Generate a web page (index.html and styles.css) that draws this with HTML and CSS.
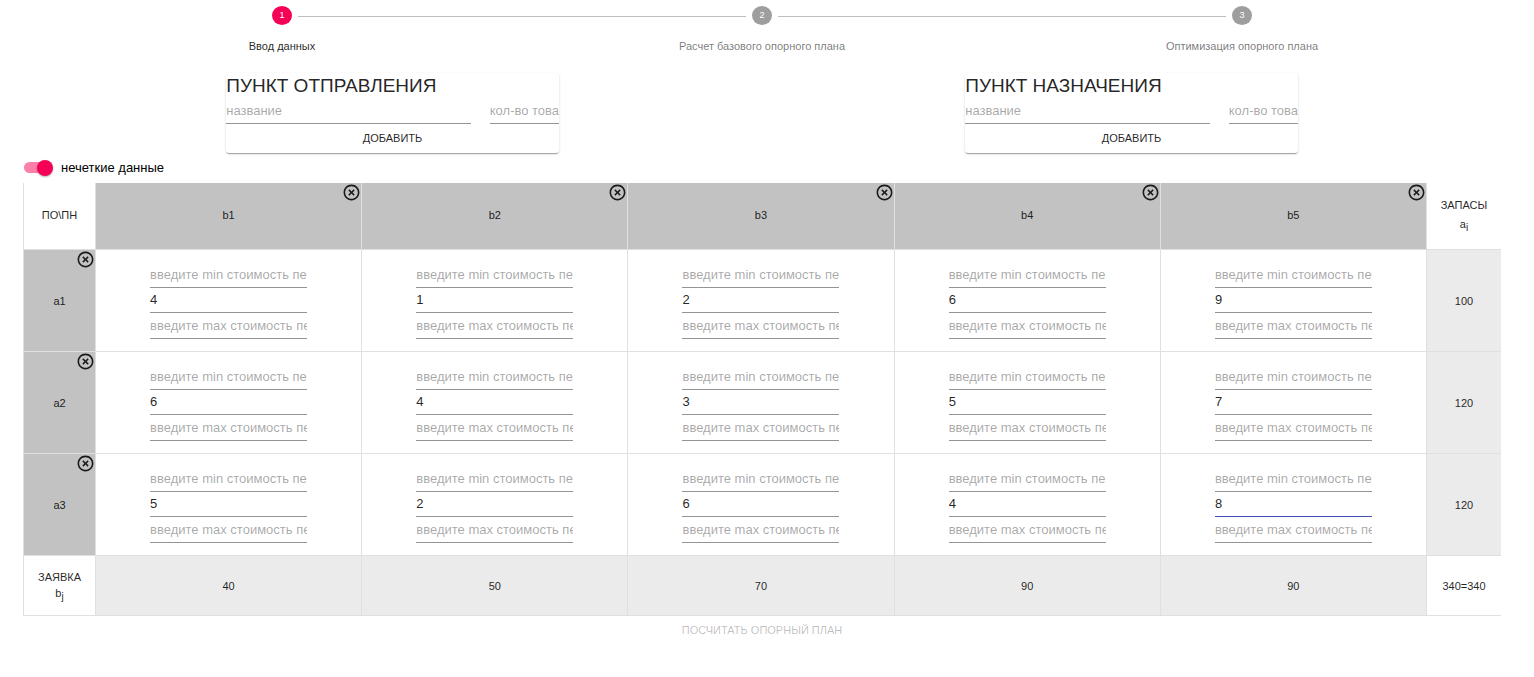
FILE: index.html
```html
<!DOCTYPE html>
<html lang="ru">
<head>
<meta charset="utf-8">
<meta name="viewport" content="width=device-width, initial-scale=1">
<title>Транспортная задача</title>
<link rel="stylesheet" href="styles.css">
</head>
<body>
<svg class="sprite" aria-hidden="true">
  <symbol id="remove" viewBox="0 0 24 24">
    <path d="M14.59 8L12 10.59 9.41 8 8 9.41 10.59 12 8 14.59 9.41 16 12 13.41 14.59 16 16 14.59 13.41 12 16 9.41 14.59 8zM12 2C6.47 2 2 6.47 2 12s4.47 10 10 10 10-4.47 10-10S17.53 2 12 2zm0 18c-4.41 0-8-3.59-8-8s3.59-8 8-8 8 3.59 8 8-3.59 8-8 8z"/>
  </symbol>
</svg>
<main class="page">
  <ol class="stepper">
    <li class="step step-active"><span class="step-track"><span class="step-number">1</span></span><span class="step-label">Ввод данных</span></li>
    <li class="step"><span class="step-track"><span class="step-number">2</span></span><span class="step-label">Расчет базового опорного плана</span></li>
    <li class="step"><span class="step-track"><span class="step-number">3</span></span><span class="step-label">Оптимизация опорного плана</span></li>
  </ol>

  <div class="forms">
    <form class="card">
      <h2 class="card-title">ПУНКТ ОТПРАВЛЕНИЯ</h2>
      <div class="card-fields">
        <input class="field" type="text" placeholder="название" aria-label="название пункта отправления">
        <input class="field" type="text" placeholder="кол-во товара" aria-label="кол-во товара в пункте отправления">
      </div>
      <button class="button" type="button">ДОБАВИТЬ</button>
    </form>
    <form class="card">
      <h2 class="card-title">ПУНКТ НАЗНАЧЕНИЯ</h2>
      <div class="card-fields">
        <input class="field" type="text" placeholder="название" aria-label="название пункта назначения">
        <input class="field" type="text" placeholder="кол-во товара" aria-label="кол-во товара в пункте назначения">
      </div>
      <button class="button" type="button">ДОБАВИТЬ</button>
    </form>
  </div>

  <label class="switch"><input class="switch-input" type="checkbox" role="switch" checked><span>нечеткие данные</span></label>

  <table class="plan">
    <colgroup><col class="col-name"><col><col><col><col><col><col class="col-stock"></colgroup>
    <thead>
      <tr>
        <th scope="col">ПО\ПН</th>
        <th class="point" scope="col">b1<button class="remove" type="button" aria-label="Удалить b1"><svg class="icon"><use href="#remove"/></svg></button></th>
        <th class="point" scope="col">b2<button class="remove" type="button" aria-label="Удалить b2"><svg class="icon"><use href="#remove"/></svg></button></th>
        <th class="point" scope="col">b3<button class="remove" type="button" aria-label="Удалить b3"><svg class="icon"><use href="#remove"/></svg></button></th>
        <th class="point" scope="col">b4<button class="remove" type="button" aria-label="Удалить b4"><svg class="icon"><use href="#remove"/></svg></button></th>
        <th class="point" scope="col">b5<button class="remove" type="button" aria-label="Удалить b5"><svg class="icon"><use href="#remove"/></svg></button></th>
        <th scope="col">ЗАПАСЫ<br>a<sub>i</sub></th>
      </tr>
    </thead>
    <tbody>
      <tr>
        <th class="point" scope="row">a1<button class="remove" type="button" aria-label="Удалить a1"><svg class="icon"><use href="#remove"/></svg></button></th>
        <td><div class="cost"><input class="field" placeholder="введите min стоимость перевозки" aria-label="a1 b1 min"><input class="field" value="4" aria-label="a1 b1"><input class="field" placeholder="введите max стоимость перевозки" aria-label="a1 b1 max"></div></td>
        <td><div class="cost"><input class="field" placeholder="введите min стоимость перевозки" aria-label="a1 b2 min"><input class="field" value="1" aria-label="a1 b2"><input class="field" placeholder="введите max стоимость перевозки" aria-label="a1 b2 max"></div></td>
        <td><div class="cost"><input class="field" placeholder="введите min стоимость перевозки" aria-label="a1 b3 min"><input class="field" value="2" aria-label="a1 b3"><input class="field" placeholder="введите max стоимость перевозки" aria-label="a1 b3 max"></div></td>
        <td><div class="cost"><input class="field" placeholder="введите min стоимость перевозки" aria-label="a1 b4 min"><input class="field" value="6" aria-label="a1 b4"><input class="field" placeholder="введите max стоимость перевозки" aria-label="a1 b4 max"></div></td>
        <td><div class="cost"><input class="field" placeholder="введите min стоимость перевозки" aria-label="a1 b5 min"><input class="field" value="9" aria-label="a1 b5"><input class="field" placeholder="введите max стоимость перевозки" aria-label="a1 b5 max"></div></td>
        <td class="total">100</td>
      </tr>
      <tr>
        <th class="point" scope="row">a2<button class="remove" type="button" aria-label="Удалить a2"><svg class="icon"><use href="#remove"/></svg></button></th>
        <td><div class="cost"><input class="field" placeholder="введите min стоимость перевозки" aria-label="a2 b1 min"><input class="field" value="6" aria-label="a2 b1"><input class="field" placeholder="введите max стоимость перевозки" aria-label="a2 b1 max"></div></td>
        <td><div class="cost"><input class="field" placeholder="введите min стоимость перевозки" aria-label="a2 b2 min"><input class="field" value="4" aria-label="a2 b2"><input class="field" placeholder="введите max стоимость перевозки" aria-label="a2 b2 max"></div></td>
        <td><div class="cost"><input class="field" placeholder="введите min стоимость перевозки" aria-label="a2 b3 min"><input class="field" value="3" aria-label="a2 b3"><input class="field" placeholder="введите max стоимость перевозки" aria-label="a2 b3 max"></div></td>
        <td><div class="cost"><input class="field" placeholder="введите min стоимость перевозки" aria-label="a2 b4 min"><input class="field" value="5" aria-label="a2 b4"><input class="field" placeholder="введите max стоимость перевозки" aria-label="a2 b4 max"></div></td>
        <td><div class="cost"><input class="field" placeholder="введите min стоимость перевозки" aria-label="a2 b5 min"><input class="field" value="7" aria-label="a2 b5"><input class="field" placeholder="введите max стоимость перевозки" aria-label="a2 b5 max"></div></td>
        <td class="total">120</td>
      </tr>
      <tr>
        <th class="point" scope="row">a3<button class="remove" type="button" aria-label="Удалить a3"><svg class="icon"><use href="#remove"/></svg></button></th>
        <td><div class="cost"><input class="field" placeholder="введите min стоимость перевозки" aria-label="a3 b1 min"><input class="field" value="5" aria-label="a3 b1"><input class="field" placeholder="введите max стоимость перевозки" aria-label="a3 b1 max"></div></td>
        <td><div class="cost"><input class="field" placeholder="введите min стоимость перевозки" aria-label="a3 b2 min"><input class="field" value="2" aria-label="a3 b2"><input class="field" placeholder="введите max стоимость перевозки" aria-label="a3 b2 max"></div></td>
        <td><div class="cost"><input class="field" placeholder="введите min стоимость перевозки" aria-label="a3 b3 min"><input class="field" value="6" aria-label="a3 b3"><input class="field" placeholder="введите max стоимость перевозки" aria-label="a3 b3 max"></div></td>
        <td><div class="cost"><input class="field" placeholder="введите min стоимость перевозки" aria-label="a3 b4 min"><input class="field" value="4" aria-label="a3 b4"><input class="field" placeholder="введите max стоимость перевозки" aria-label="a3 b4 max"></div></td>
        <td><div class="cost"><input class="field" placeholder="введите min стоимость перевозки" aria-label="a3 b5 min"><input class="field field-current" value="8" aria-label="a3 b5"><input class="field" placeholder="введите max стоимость перевозки" aria-label="a3 b5 max"></div></td>
        <td class="total">120</td>
      </tr>
    </tbody>
    <tfoot>
      <tr>
        <th scope="row">ЗАЯВКА<br>b<sub>j</sub></th>
        <td class="total">40</td>
        <td class="total">50</td>
        <td class="total">70</td>
        <td class="total">90</td>
        <td class="total">90</td>
        <td>340=340</td>
      </tr>
    </tfoot>
  </table>

  <button class="button" type="button" disabled>ПОСЧИТАТЬ ОПОРНЫЙ ПЛАН</button>
</main>
</body>
</html>
```

FILE: styles.css
```css
:root {
  --text: rgba(0, 0, 0, 0.87);
  --muted: rgba(0, 0, 0, 0.54);
  --line: #e0e0e0;
  --accent: #f50057;
}

*, *::before, *::after { box-sizing: border-box; }

body {
  margin: 0;
  background: #fff;
  color: var(--text);
  font: 11px/16px "Liberation Sans", Arial, sans-serif;
}

.sprite { display: none; }

.page {
  display: flex;
  flex-direction: column;
  padding: 0 33px 0 23px;
}

/* Stepper */
.stepper {
  display: flex;
  margin: 0;
  padding: 6px 19px 19px;
  list-style: none;
}

.step {
  flex: 1;
  color: var(--muted);
  text-align: center;
}

.step-active { color: var(--text); }

.step-track {
  display: flex;
  align-items: center;
  gap: 6px;
  margin-bottom: 13px;
}

.step-track::before,
.step-track::after {
  content: "";
  flex: 1;
  height: 2px;
  border-bottom: 1px solid #bdbdbd;
}

.step:first-child .step-track::before,
.step:last-child .step-track::after { visibility: hidden; }

.step-number {
  width: 20px;
  height: 19px;
  border-radius: 50%;
  background: #9e9e9e;
  color: #fff;
  font-size: 9px;
  line-height: 19px;
}

.step-active .step-number { background: var(--accent); }

.step-label { display: block; }

/* Point forms */
.forms {
  display: grid;
  grid-template-columns: 1fr 1fr;
  justify-items: center;
}

.card {
  display: flex;
  flex-direction: column;
  width: 45%;
  overflow: hidden;
  border-radius: 3px;
  box-shadow: 0 2px 1px -1px rgba(0, 0, 0, 0.2), 0 1px 1px rgba(0, 0, 0, 0.14), 0 1px 3px rgba(0, 0, 0, 0.12);
}

.card-title {
  margin: 0;
  font-size: 19px;
  font-weight: 400;
  line-height: 25px;
}

.card-fields {
  display: grid;
  grid-template-columns: 1fr 69px;
  gap: 19px;
}

.field {
  width: 100%;
  min-width: 0;
  height: 26px;
  padding: 0;
  border: 0;
  border-bottom: 1px solid #949494;
  border-radius: 0;
  outline: 0;
  background: none;
  color: var(--text);
  font: inherit;
  font-size: 13px;
}

.field::placeholder { color: rgba(0, 0, 0, 0.36); opacity: 1; }

.field:focus,
.field-current { border-color: #3f51b5; }

.button {
  padding: 6px 6px 7px;
  border: 0;
  background: none;
  color: var(--text);
  font: inherit;
  cursor: pointer;
}

.button:disabled { color: rgba(0, 0, 0, 0.26); cursor: default; }

/* Switch */
.switch {
  display: flex;
  align-items: center;
  align-self: flex-start;
  gap: 8px;
  padding: 7px 0 7px 1px;
  color: #000;
  font-size: 13px;
}

.switch-input {
  position: relative;
  width: 29px;
  height: 16px;
  margin: 0;
  appearance: none;
}

.switch-input::before {
  content: "";
  position: absolute;
  inset: 2px 2px 3px 0;
  border-radius: 6px;
  background: #9e9e9e;
}

.switch-input::after {
  content: "";
  position: absolute;
  inset: 0 auto 0 0;
  width: 16px;
  border-radius: 50%;
  background: #fafafa;
  box-shadow: 0 1px 2px rgba(0, 0, 0, 0.3);
}

.switch-input:checked::before { background: #fa80ab; }

.switch-input:checked::after {
  inset: 0 0 0 auto;
  background: var(--accent);
}

/* Transport plan */
.plan {
  width: 100%;
  table-layout: fixed;
  border-collapse: separate;
  border-spacing: 0;
  text-align: center;
}

.col-name { width: 72px; }
.col-stock { width: 75px; }

.plan th,
.plan td {
  position: relative;
  padding: 13px 0 12px;
  border: solid var(--line);
  border-width: 0 0 1px 1px;
  font-weight: 400;
}

.plan thead th {
  height: 67px;
  padding: 0 0 2px;
  line-height: 19px;
}

.plan tfoot th,
.plan tfoot td { height: 60px; }

.plan sub { font-size: 10px; line-height: 1; }

.plan .point { background: #c2c2c2; }
.plan .total { background: #ebebeb; }

.remove {
  position: absolute;
  top: 0;
  right: 0;
  padding: 0;
  border: 0;
  background: none;
  color: var(--text);
  cursor: pointer;
}

.icon {
  display: block;
  width: 19px;
  height: 19px;
  fill: currentColor;
}

.cost {
  display: grid;
  grid-template-rows: 25px 25px 26px;
  width: 157px;
  margin: 0 auto;
}

.cost .field { height: auto; }
```
